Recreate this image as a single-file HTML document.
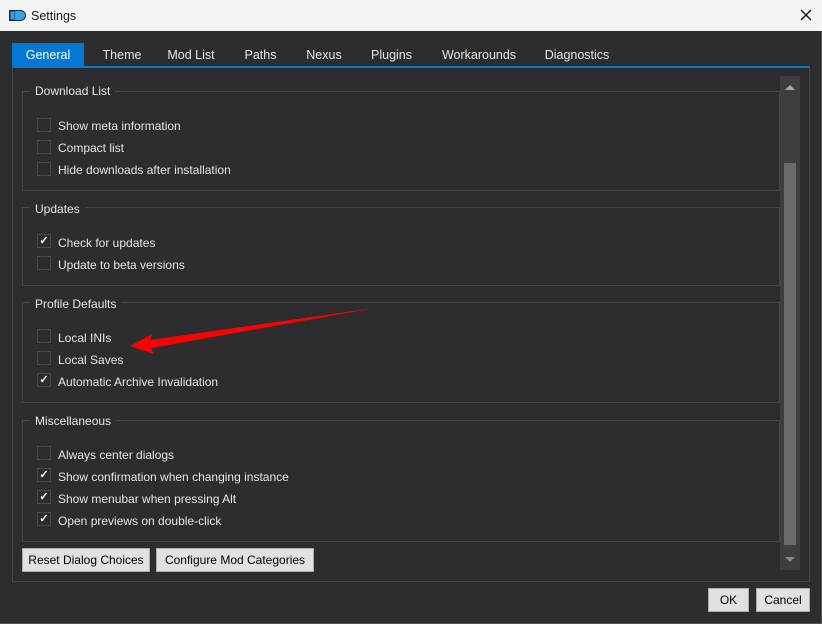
<!DOCTYPE html>
<html><head><style>
*{margin:0;padding:0;box-sizing:border-box}
body{width:822px;height:624px;background:#2d2d30;font-family:"Liberation Sans",sans-serif;font-size:12px;color:#e6e6e6;position:relative;overflow:hidden}
.a{position:absolute}
.title{left:0;top:0;width:822px;height:31px;background:#f3f3f3;color:#1a1a1a}
.tab{top:43px;height:23px;line-height:24px;text-align:center;color:#e6e6e6;font-size:12.5px}
.grp{border:1px solid #454548;left:22px;width:758px}
.gt{background:#2d2d30;padding:0 5px;left:30px;font-size:12px}
.cb{width:14px;height:14px;border:1px solid #48484b;background:#2d2d30;left:37px;color:#fff;font-size:11px;line-height:12px;text-align:center;font-weight:bold}
.lb{left:58px;font-size:12px}
.btn{background:#e1e1e1;border:1px solid #adadad;color:#000;text-align:center;font-size:12px}
</style></head><body>
<div class="a title">
 <svg class="a" style="left:9px;top:10px" width="17" height="11"><rect x="0.5" y="0.5" width="16" height="10" rx="5" fill="#3aa0e0" stroke="#13324a"/><rect x="0" y="0" width="6" height="11" fill="#13324a"/><rect x="1.5" y="1.5" width="4" height="8" fill="#3aa0e0"/></svg>
 <div class="a" style="left:31px;top:9px;font-size:12.5px">Settings</div>
 <svg class="a" style="left:800px;top:9px" width="12" height="12"><path d="M1 1L11 11M11 1L1 11" stroke="#111" stroke-width="1.3"/></svg>
</div>
<div class="a" style="left:821px;top:31px;width:1px;height:593px;background:#555"></div>
<div class="a" style="left:0;top:623px;width:822px;height:1px;background:#555"></div>
<div class="a tab" style="left:12px;width:72px;background:#0078d4;color:#fff">General</div>
<div class="a tab" style="left:97px;width:50px">Theme</div>
<div class="a tab" style="left:160px;width:62px">Mod List</div>
<div class="a tab" style="left:238px;width:45px">Paths</div>
<div class="a tab" style="left:298px;width:52px">Nexus</div>
<div class="a tab" style="left:364px;width:55px">Plugins</div>
<div class="a tab" style="left:434px;width:90px">Workarounds</div>
<div class="a tab" style="left:538px;width:78px">Diagnostics</div>
<div class="a" style="left:12px;top:66px;width:798px;height:516px;border:1px solid #454548;border-top:2px solid #0078d4"></div>
<div class="a" style="left:780px;top:76px;width:20px;height:494px;background:#3e3e42"></div>
<div class="a" style="left:784px;top:163px;width:12px;height:382px;background:#6a6a6a"></div>
<svg class="a" style="left:785px;top:84px" width="10" height="6"><path d="M0 6L5 1L10 6Z" fill="#aaa"/></svg>
<svg class="a" style="left:785px;top:557px" width="10" height="6"><path d="M0 0L5 5L10 0Z" fill="#888"/></svg>

<div class="a grp" style="top:91px;height:100px"></div>
<div class="a gt" style="top:84px">Download List</div>
<div class="a cb" style="top:118px"></div><div class="a lb" style="top:119px">Show meta information</div>
<div class="a cb" style="top:140px"></div><div class="a lb" style="top:141px">Compact list</div>
<div class="a cb" style="top:162px"></div><div class="a lb" style="top:163px">Hide downloads after installation</div>

<div class="a grp" style="top:207px;height:79px"></div>
<div class="a gt" style="top:202px">Updates</div>
<div class="a cb" style="top:234px">✓</div><div class="a lb" style="top:236px">Check for updates</div>
<div class="a cb" style="top:256px"></div><div class="a lb" style="top:258px">Update to beta versions</div>

<div class="a grp" style="top:302px;height:101px"></div>
<div class="a gt" style="top:297px">Profile Defaults</div>
<div class="a cb" style="top:329px"></div><div class="a lb" style="top:331px">Local INIs</div>
<div class="a cb" style="top:351px"></div><div class="a lb" style="top:353px">Local Saves</div>
<div class="a cb" style="top:373px">✓</div><div class="a lb" style="top:375px">Automatic Archive Invalidation</div>

<div class="a grp" style="top:420px;height:122px"></div>
<div class="a gt" style="top:414px">Miscellaneous</div>
<div class="a cb" style="top:446px"></div><div class="a lb" style="top:448px">Always center dialogs</div>
<div class="a cb" style="top:468px">✓</div><div class="a lb" style="top:470px">Show confirmation when changing instance</div>
<div class="a cb" style="top:490px">✓</div><div class="a lb" style="top:492px">Show menubar when pressing Alt</div>
<div class="a cb" style="top:512px">✓</div><div class="a lb" style="top:514px">Open previews on double-click</div>

<svg class="a" style="left:0;top:0" width="822" height="624"><path d="M375 308L150 340L152 334L130 346L154 354L151 348Z" fill="#ff0000"/></svg>

<div class="a btn" style="left:22px;top:548px;width:128px;height:24px;line-height:23px">Reset Dialog Choices</div>
<div class="a btn" style="left:156px;top:548px;width:158px;height:24px;line-height:23px">Configure Mod Categories</div>
<div class="a btn" style="left:708px;top:588px;width:41px;height:24px;line-height:23px">OK</div>
<div class="a btn" style="left:756px;top:588px;width:54px;height:24px;line-height:23px">Cancel</div>
</body></html>
